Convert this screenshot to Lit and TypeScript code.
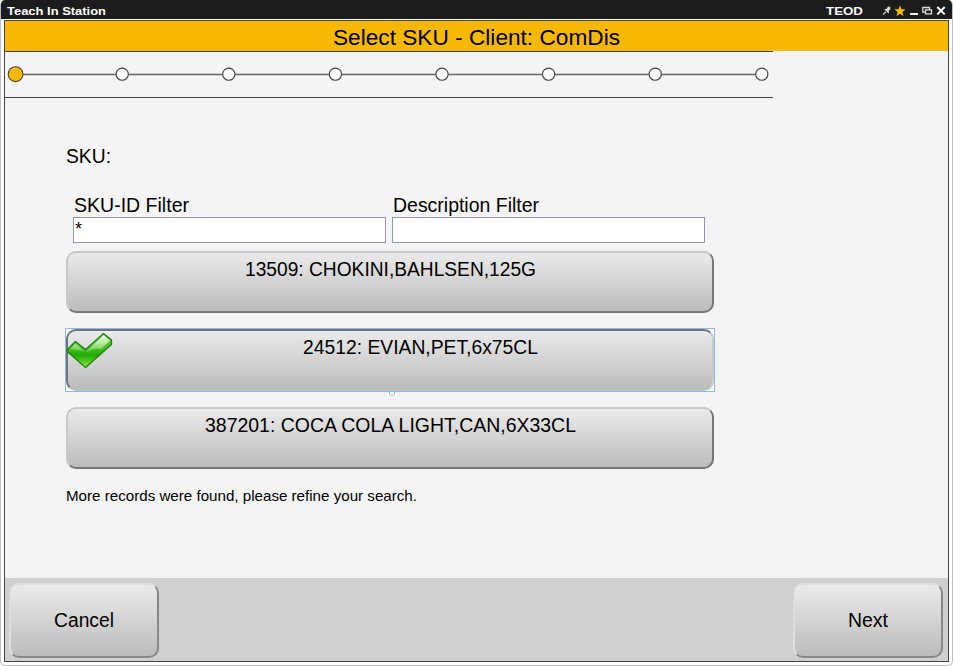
import { LitElement, html, css, svg } from "lit";
import { customElement, property } from "lit/decorators.js";

@customElement("fit-text")
class FitText extends LitElement {
  @property({ type: Number }) width = 0;
  @property({ type: Number }) size = 20;
  @property() text = "";
  static styles = css`
    :host { display: block; line-height: 0; }
    svg { display: block; overflow: visible; }
    text { fill: currentColor; }
  `;
  render() {
    return html`<svg width=${this.width} height="20">
      <text x="0" y="16" font-size=${this.size} textLength=${this.width} lengthAdjust="spacingAndGlyphs">${this.text}</text>
    </svg>`;
  }
}

@customElement("app-root")
class AppRoot extends LitElement {
  static styles = css`
    * { box-sizing: border-box; }
    :host { display: block; width: 953px; height: 666px; font-family: "Liberation Sans", Arial, sans-serif; color: #000; background: #fff; overflow: hidden; }
    .window { height: 666px; display: flex; flex-direction: column; border: 1px solid #b5c0c7; border-top: 0; border-radius: 5px; overflow: hidden; background: #fff; }
    .titlebar { margin: 0 -1px; height: 19px; flex: none; background: #1c1c1c; color: #fff; display: flex; align-items: flex-start; padding: 0 6px 0 7px; font-weight: bold; }
    .titlebar fit-text { margin-top: -1px; }
    .user { margin-left: auto; margin-right: 19px; }
    .icons { display: block; width: 65px; height: 14px; margin-top: 4px; }
    .frame { margin: 1px 3px 4px 3px; height: 642px; flex: none; border: 1px solid #444; display: flex; flex-direction: column; background: #f4f4f4; }
    .banner { height: 30px; flex: none; background: #f7b900; display: flex; justify-content: center; padding: 8px 1px 0 0; }
    .steps { width: 768px; height: 47px; flex: none; border-top: 1px solid #444; border-bottom: 1px solid #444; }
    .steps svg { display: block; }
    .content { flex: 1; padding: 49px 0 0 61px; }
    .filters { display: flex; gap: 6px; margin: 29px 0 0 7px; }
    .filter { width: 313px; }
    .filter fit-text { margin-left: 1px; }
    .input { height: 26px; margin-top: 1px; border: 1px solid #8e99ab; background: #fff; padding: 1px 0 0 1px; font-size: 18px; line-height: 20px; }
    .list { display: flex; flex-direction: column; gap: 16px; margin-top: 8px; isolation: isolate; }
    .btn { border: 2px solid; border-color: #c8c8c8 #777 #777 #c8c8c8; border-radius: 10px; background: linear-gradient(#ececec, #bababa) border-box; display: flex; justify-content: center; }
    .row { width: 648px; height: 62px; padding-top: 7px; position: relative; }
    .row.selected { border-color: #6f7278 #c9c9c9 #c0c0c0 #6f7278; padding-left: 60px; }
    .focus { position: absolute; inset: -3px; border: 1px solid #8db6f5; background: #fff; z-index: -1; }
    .check { position: absolute; left: -1px; top: 1px; }
    .knob { position: absolute; left: 320px; bottom: -8px; }
    .note { margin-top: 16px; }
    .footer { height: 83px; flex: none; background: #cfcfcf; display: flex; justify-content: space-between; padding: 5px 5px 3px 4px; }
    .nav { width: 150px; height: 75px; align-items: center; border-color: #dedede #888 #888 #dedede; padding-top: 1px; }
  `;

  private rows = [
    { text: "13509: CHOKINI,BAHLSEN,125G", width: 291 },
    { text: "24512: EVIAN,PET,6x75CL", width: 235, selected: true },
    { text: "387201: COCA COLA LIGHT,CAN,6X33CL", width: 371 },
  ];

  private check = html`
    <svg class="check" width="46" height="38" viewBox="0 0 46 38">
      <defs>
        <linearGradient id="green" x1="0" y1="0" x2="0" y2="1">
          <stop offset="0" stop-color="#6fd64c" /><stop offset=".4" stop-color="#45c41c" />
          <stop offset=".65" stop-color="#22aa08" /><stop offset="1" stop-color="#8cf03a" />
        </linearGradient>
        <linearGradient id="shine" x1="0" y1="0" x2="0" y2="1">
          <stop offset="0" stop-color="#fff" stop-opacity=".9" /><stop offset="1" stop-color="#fff" stop-opacity=".2" />
        </linearGradient>
      </defs>
      <path d="M.8 17 L8.5 9.5 L18.5 17.5 L36.5 1.5 L44.5 8 V12.5 L18.5 35.5 L.8 20Z" fill="url(#green)" stroke="#1f8010" stroke-width="1.3" stroke-linejoin="round" />
      <path d="M3 17 L8.5 11.5 L18.5 20 L36.5 3.3 L43 8.5 L34 17 Q27 16 20 20 Q12 18 3 17Z" fill="url(#shine)" />
    </svg>`;

  render() {
    return html`
      <div class="window">
        <div class="titlebar">
          <fit-text text="Teach In Station" .width=${99} .size=${11.8}></fit-text>
          <fit-text class="user" text="TEOD" .width=${37} .size=${11.8}></fit-text>
          <svg class="icons" viewBox="0 0 65 14">
            <path d="M1 10.5 L4 7.7" stroke="#ccc" stroke-width="1.2" />
            <path d="M2 5 L4.2 4.9 L5.6 3.6 L5.4 2.8 H8.3 V5.7 L7.4 5.8 L6.8 7.2 L6.9 9.8Z" fill="#ddd" />
            <path d="M18 1.2 L19.5 5.2 L23.6 5.3 L20.4 7.9 L21.5 12 L18 9.7 L14.5 12 L15.6 7.9 L12.4 5.3 L16.5 5.2Z" fill="#f7b900" />
            <path d="M28 10H36" stroke="#eee" stroke-width="1.8" />
            <path d="M43.2 8.2H40.8V3.5H47.5V5.3 M43.5 5.8H49.5V9.8H43.5Z" stroke="#ddd" fill="none" stroke-width="1.3" />
            <path d="M55.3 3L62.7 10.4M62.7 3L55.3 10.4" stroke="#fff" stroke-width="2" />
          </svg>
        </div>
        <div class="frame">
          <div class="banner"><fit-text text="Select SKU - Client: ComDis" .width=${287} .size=${22.6}></fit-text></div>
          <div class="steps">
            <svg width="768" height="45">
              <path d="M11 22.5H757" stroke="#666" stroke-width="1.3" />
              ${[0, 1, 2, 3, 4, 5, 6, 7].map((i) => svg`<circle cx=${10.6 + i * 106.6} cy="22.2" r=${i ? 6.1 : 7.4} fill=${i ? "#fff" : "#f7b900"} stroke="#444" stroke-width="1.1" />`)}
            </svg>
          </div>
          <div class="content">
            <fit-text text="SKU:" .width=${45} .size=${19.5}></fit-text>
            <div class="filters">
              <div class="filter"><fit-text text="SKU-ID Filter" .width=${115} .size=${19.3}></fit-text><div class="input">*</div></div>
              <div class="filter"><fit-text text="Description Filter" .width=${146} .size=${19.3}></fit-text><div class="input"></div></div>
            </div>
            <div class="list">
              ${this.rows.map((r) => html`<div class="btn row ${r.selected ? "selected" : ""}">
                <fit-text text=${r.text} .width=${r.width} .size=${19.5}></fit-text>
                ${r.selected ? html`<div class="focus"></div>${this.check}
                  <svg class="knob" width="8" height="7"><path d="M1.5 1.5H6.5V4L5 5.5H3L1.5 4Z" fill="#fff" stroke="#8db6f5" /></svg>` : ""}
              </div>`)}
            </div>
            <fit-text class="note" text="More records were found, please refine your search." .width=${351} .size=${14.6}></fit-text>
          </div>
          <div class="footer">
            <div class="btn nav"><fit-text text="Cancel" .width=${60} .size=${19.5}></fit-text></div>
            <div class="btn nav"><fit-text text="Next" .width=${40} .size=${19.5}></fit-text></div>
          </div>
        </div>
      </div>`;
  }
}
